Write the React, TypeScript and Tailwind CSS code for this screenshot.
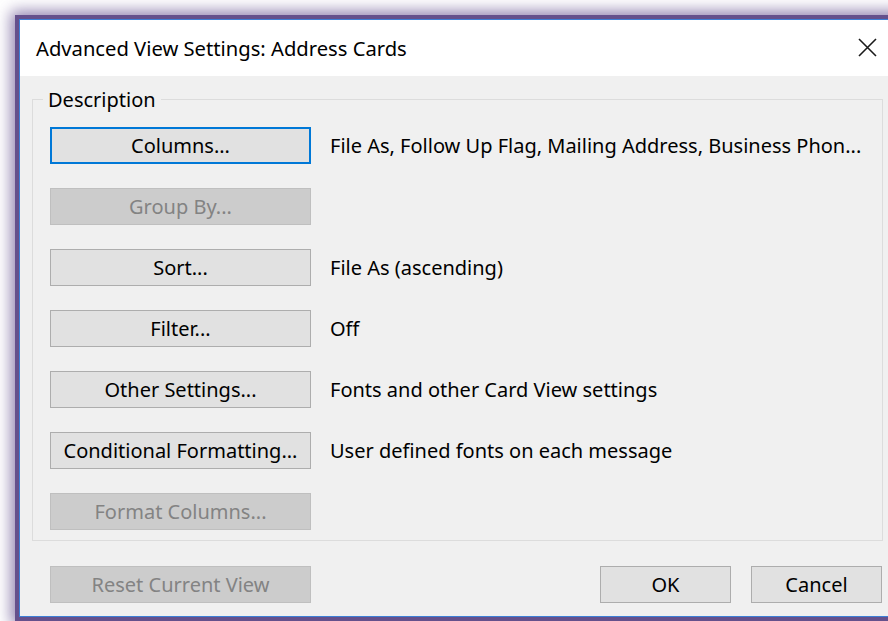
import React from "react";

type Row = { label: string; value?: string; disabled?: boolean; focused?: boolean };

const rows: Row[] = [
  { label: "Columns...", value: "File As, Follow Up Flag, Mailing Address, Business Phon...", focused: true },
  { label: "Group By...", disabled: true },
  { label: "Sort...", value: "File As (ascending)" },
  { label: "Filter...", value: "Off" },
  { label: "Other Settings...", value: "Fonts and other Card View settings" },
  { label: "Conditional Formatting...", value: "User defined fonts on each message" },
  { label: "Format Columns...", disabled: true },
];

function DlgButton({
  label,
  disabled,
  focused,
  width,
}: {
  label: string;
  disabled?: boolean;
  focused?: boolean;
  width: string;
}) {
  if (disabled) {
    return (
      <div
        className={`${width} h-[37px] shrink-0 flex items-center justify-center border border-[#bfbfbf] bg-[#cccccc] text-[#838383]`}
      >
        {label}
      </div>
    );
  }
  if (focused) {
    return (
      <div
        className={`${width} h-[37px] shrink-0 flex items-center justify-center border-2 border-[#0078d7] bg-[#e1e1e1] text-black`}
      >
        {label}
      </div>
    );
  }
  return (
    <div
      className={`${width} h-[37px] shrink-0 flex items-center justify-center border border-[#adadad] bg-[#e1e1e1] text-black`}
    >
      {label}
    </div>
  );
}

export default function App() {
  return (
    <div
      className="w-[888px] h-[621px] overflow-hidden bg-white pt-[15px] pl-[15px]"
      style={{ fontFamily: '"Noto Sans", "Open Sans", sans-serif' }}
    >
      <div className="w-[900px] h-[606px] border-4 border-r-0 border-[#65508c] shadow-[0_0_14px_4px_rgba(110,90,150,0.75)]">
        <div className="h-full border border-r-0 border-[#3d7fd6] flex flex-col">
          {/* title bar */}
          <div className="h-[56px] shrink-0 bg-white flex items-center pl-[16px]">
            <span className="text-[20.2px] text-black">Advanced View Settings: Address Cards</span>
            <svg width="19" height="19" viewBox="0 0 19 19" className="ml-[451px] mb-[1px]">
              <path d="M1 1 L18 18 M18 1 L1 18" stroke="#1a1a1a" strokeWidth="1.6" fill="none" />
            </svg>
          </div>

          {/* body */}
          <div className="flex-1 bg-[#f0f0f0] pt-[23px] pl-[12px] text-[20px] text-black">
            <div className="relative w-[851px] h-[442px] border border-[#dcdcdc] pl-[17px] pt-[27px]">
              <span className="absolute left-[10px] top-[-12px] bg-[#f0f0f0] px-[5px] leading-[24px]">
                Description
              </span>
              <div className="flex flex-col gap-[24px]">
                {rows.map((r) => (
                  <div key={r.label} className="flex items-center gap-[19px]">
                    <DlgButton label={r.label} disabled={r.disabled} focused={r.focused} width="w-[261px]" />
                    {r.value && <span className="whitespace-nowrap">{r.value}</span>}
                  </div>
                ))}
              </div>
            </div>

            {/* footer */}
            <div className="flex items-center mt-[25px] pl-[18px]">
              <DlgButton label="Reset Current View" disabled width="w-[261px]" />
              <div className="ml-[289px] flex gap-[20px]">
                <DlgButton label="OK" width="w-[131px]" />
                <DlgButton label="Cancel" width="w-[131px]" />
              </div>
            </div>
          </div>
        </div>
      </div>
    </div>
  );
}
